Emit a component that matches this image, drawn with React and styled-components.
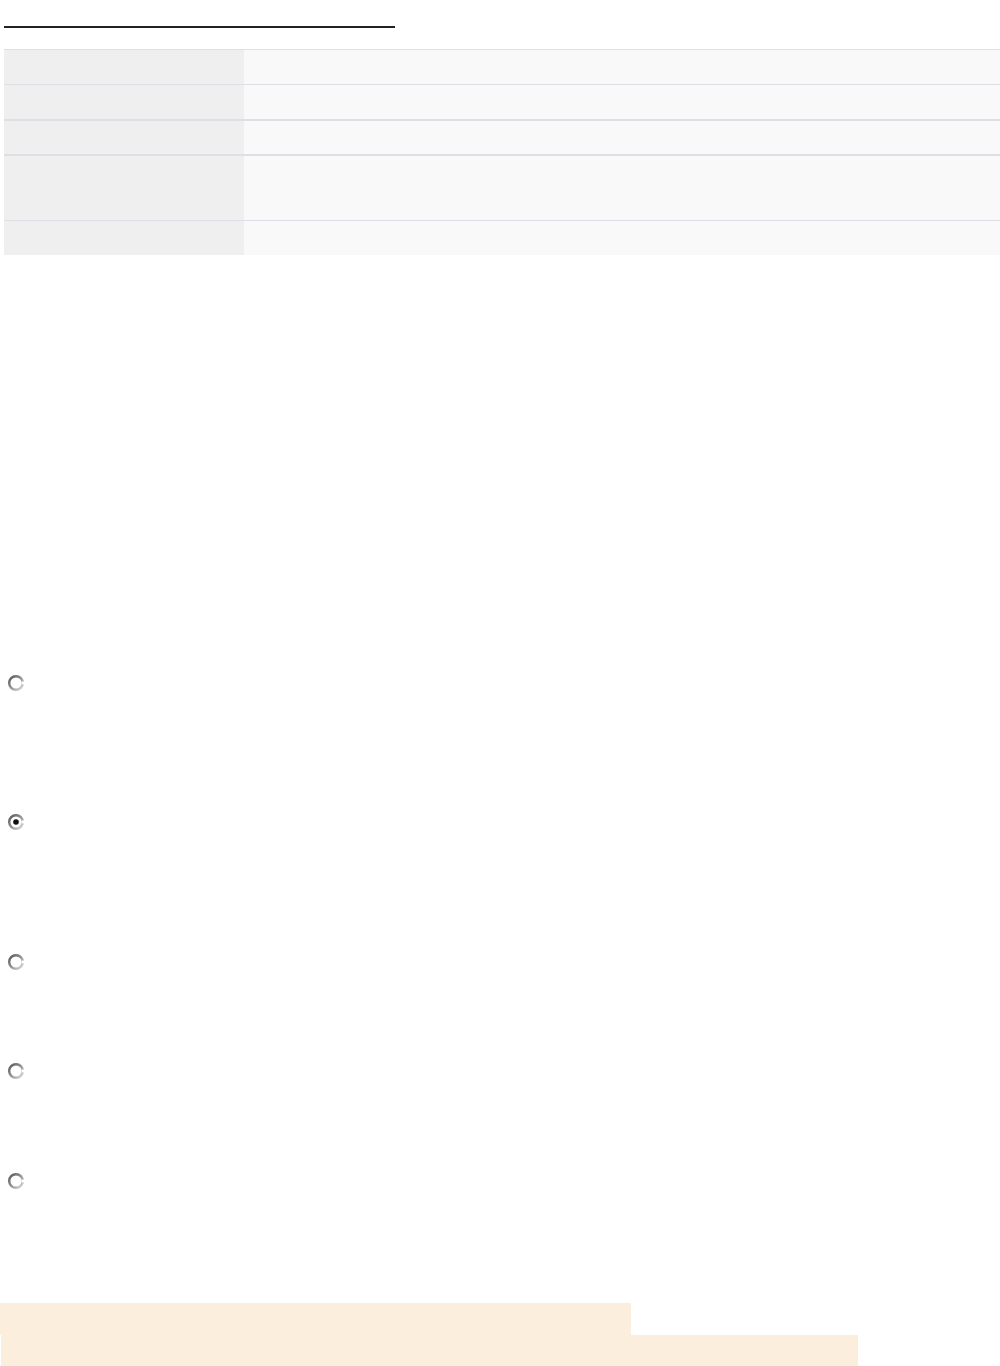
import React from 'react'
import styled, { createGlobalStyle } from 'styled-components'

const GlobalStyle = createGlobalStyle`
  html, body {
    margin: 0;
    padding: 0;
    background: #ffffff;
    font-family: "Liberation Sans", Arial, sans-serif;
  }
`

const Page = styled.div`
  width: 1000px;
  min-height: 1366px;
  display: flex;
  flex-direction: column;
`

const Title = styled.div`
  margin: 26px 0 0 4px;
  width: 391px;
  border-bottom: 2px solid #222222;
`

const InfoTable = styled.div`
  margin: 21px 0 0 4px;
  display: grid;
  grid-template-columns: 240px 1fr;
  border-top: 1px solid #e0e0e0;
`

const Label = styled.div`
  height: ${p => p.$h}px;
  background: #efefef;
  border-bottom: ${p => p.$b}px solid #dcdfe3;
`

const Value = styled.div`
  height: ${p => p.$h}px;
  background: #f9f9f9;
  border-bottom: ${p => p.$b}px solid #dcdfe3;
`

const Options = styled.div`
  display: flex;
  flex-direction: column;
  padding: 0 0 0 7px;
  margin-top: 419px;
`

const Option = styled.div`
  height: 17px;
  margin-bottom: ${p => p.$gap}px;
  display: flex;
  align-items: center;
`

const Notice = styled.div`
  margin-top: 114px;
  display: flex;
  flex-direction: column;
`

const NoticeLine = styled.div`
  width: ${p => p.$w}px;
  margin-left: ${p => p.$x}px;
  height: ${p => p.$h}px;
  background: #fbeedd;
`

// height, border below
const rows = [
  [34, 1],
  [34, 2],
  [33, 2],
  [64, 1],
  [34, 0],
]

const Radio = ({ checked }) => (
  <svg width="18" height="18" viewBox="0 0 18 18">
    <defs>
      <linearGradient id="ring" x1="0" y1="0" x2="1" y2="1">
        <stop offset="0" stopColor="#555555" />
        <stop offset="0.5" stopColor="#939393" />
        <stop offset="1" stopColor="#dddddd" />
      </linearGradient>
    </defs>
    <circle cx="9" cy="9" r="6.8" fill="#ffffff" stroke="url(#ring)" strokeWidth="2.4" />
    <path d="M16 7.6 L16 10.4" stroke="#ffffff" strokeWidth="2.6" />
    {checked && <circle cx="9" cy="9" r="2.8" fill="#111111" />}
  </svg>
)

const options = [
  { checked: false, gap: 122 },
  { checked: true, gap: 123 },
  { checked: false, gap: 92 },
  { checked: false, gap: 93 },
  { checked: false, gap: 0 },
]

export default function App() {
  return (
    <Page>
      <GlobalStyle />
      <Title />
      <InfoTable>
        {rows.map(([h, b], i) => (
          <React.Fragment key={i}>
            <Label $h={h} $b={b} />
            <Value $h={h} $b={b} />
          </React.Fragment>
        ))}
      </InfoTable>
      <Options>
        {options.map((o, i) => (
          <Option key={i} $gap={o.gap}>
            <Radio checked={o.checked} />
          </Option>
        ))}
      </Options>
      <Notice>
        <NoticeLine $w={631} $x={0} $h={32} />
        <NoticeLine $w={857} $x={1} $h={31} />
      </Notice>
    </Page>
  )
}
